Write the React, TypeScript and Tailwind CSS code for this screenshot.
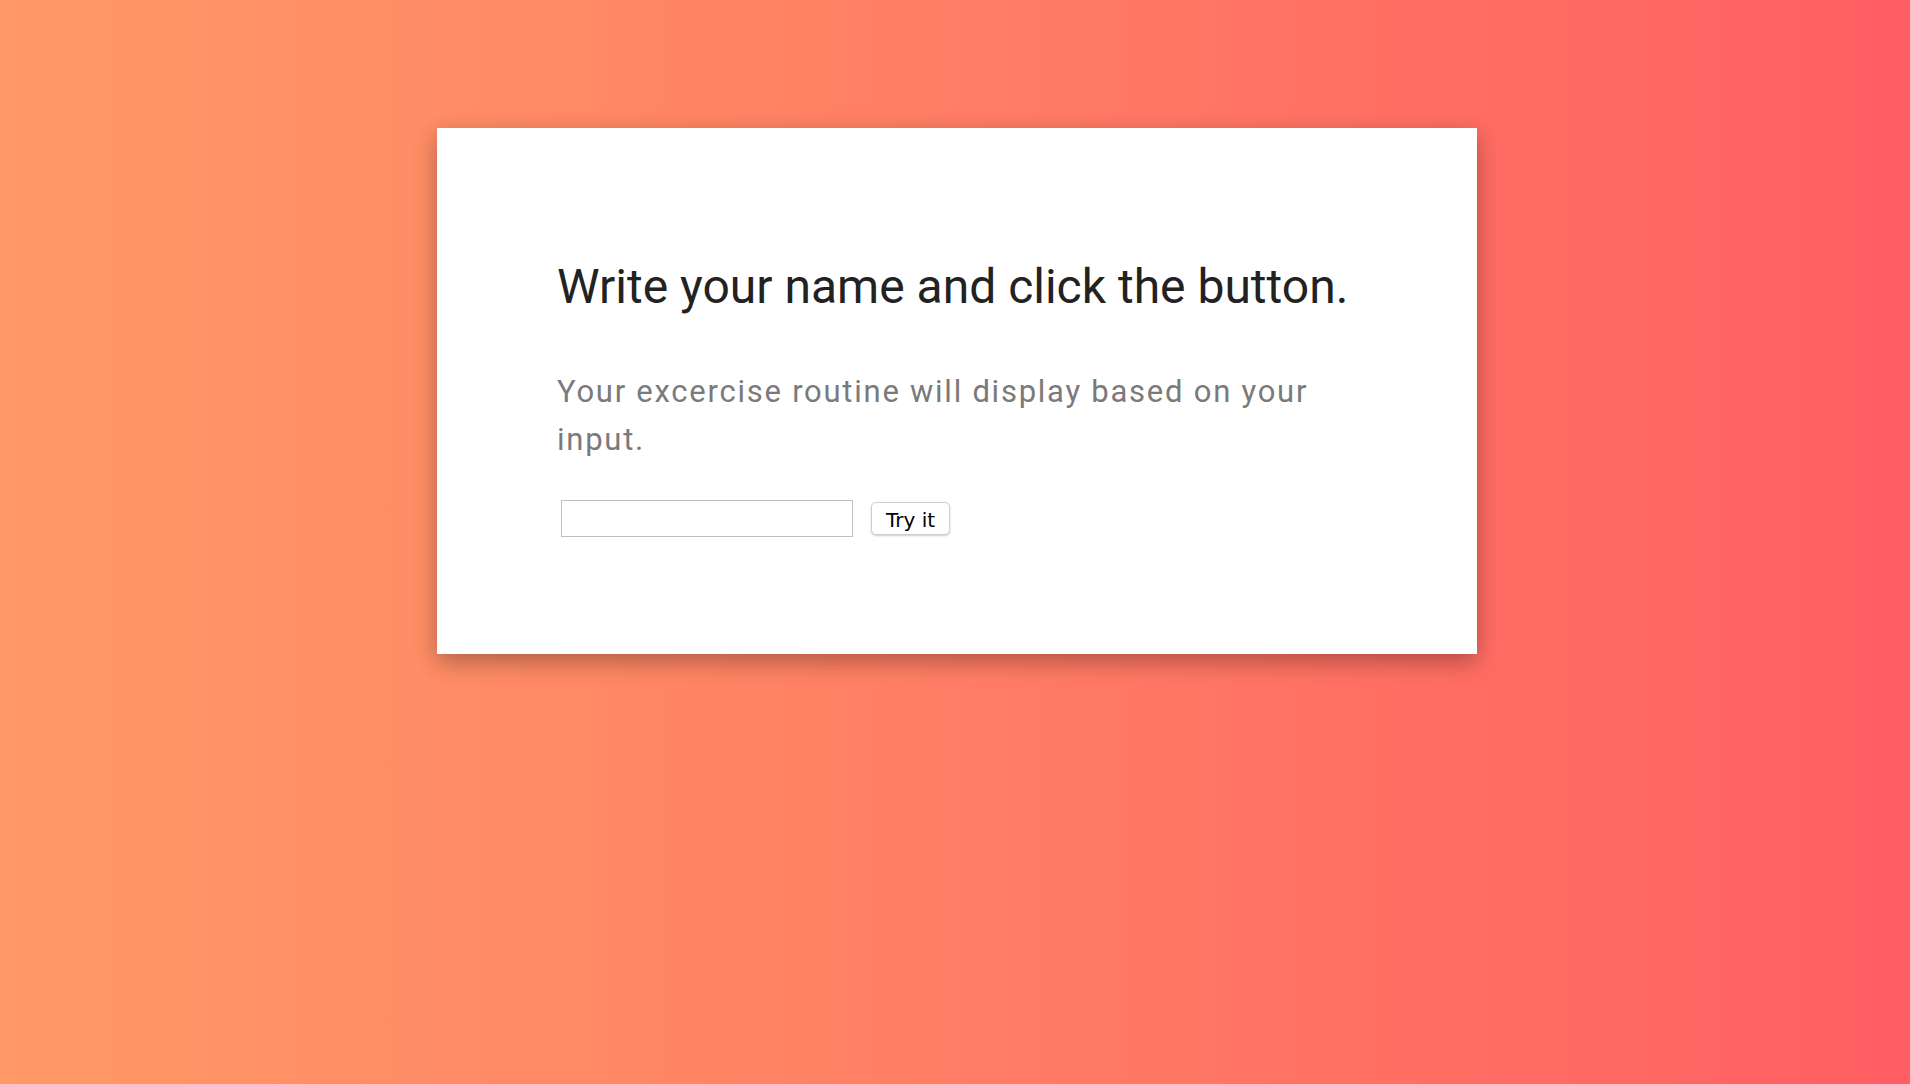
export default function App() {
	return (
		<div className="min-h-screen w-full bg-linear-to-r from-[#ff9966] to-[#ff5e62] pt-[128px]">
			{/* Card */}
			<div className="ml-[437px] w-[1040px] bg-white px-[120px] pt-[131px] pb-[117px] shadow-[0_8px_22px_rgba(0,0,0,0.3)]">
				<h1 className="font-['Roboto',sans-serif] text-[48px] leading-[56px] text-[#222222]">
					Write your name and click the button.
				</h1>
				<p className="mt-[53px] font-['Roboto',sans-serif] text-[31px] leading-[48px] tracking-[1.75px] text-[#7a7a7a]">
					Your excercise routine will display based on your input.
				</p>

				<div className="mt-[36px] flex items-center">
					<input
						type="text"
						className="ml-[4px] h-[37px] w-[292px] border border-[#c0c0c0] bg-white px-2 outline-none"
					/>
					<button className="ml-[18px] h-[33px] w-[79px] rounded-[5px] border border-[#cfcfcf] bg-white pt-[2px] font-['DejaVu_Sans',sans-serif] text-[20px] text-black shadow-[0_1px_2px_rgba(0,0,0,0.2)]">
						Try it
					</button>
				</div>
			</div>
		</div>
	);
}
